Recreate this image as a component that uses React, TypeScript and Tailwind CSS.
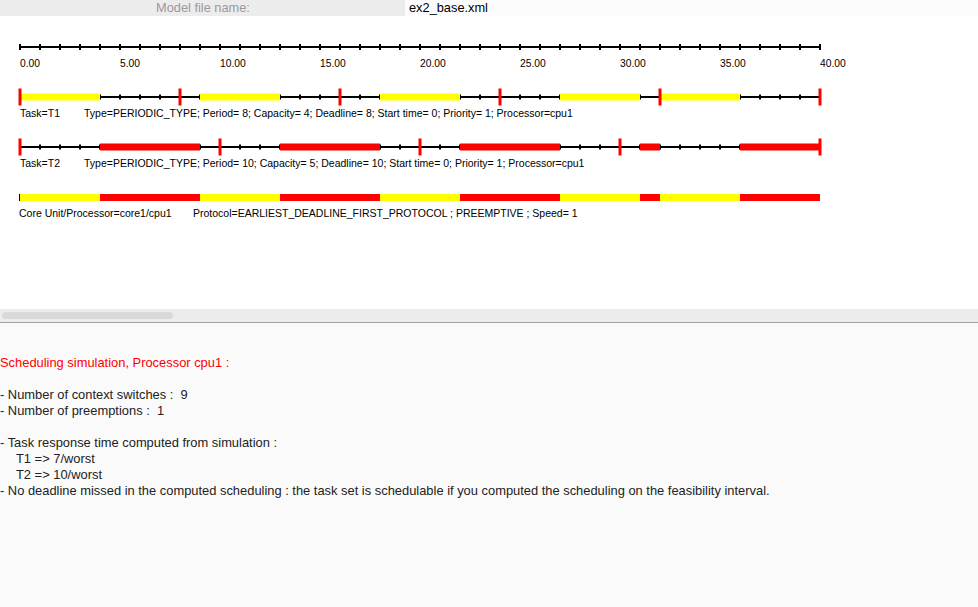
import React from 'react';

const X0 = 20;
const UNIT = 20;
const xAt = (t: number) => X0 + t * UNIT;

// [start, end] intervals on the 0..40 time scale
const t1Runs: [number, number][] = [[0, 4], [9, 13], [18, 22], [27, 31], [32, 36]];
const t2Runs: [number, number][] = [[4, 9], [13, 18], [22, 27], [31, 32], [36, 40]];
const t1Releases = [0, 8, 16, 24, 32, 40];
const t2Releases = [0, 10, 20, 30, 40];

const FONT = '"Liberation Sans", Arial, sans-serif';

function TaskRow({ y, runs, releases, color }: { y: number; runs: [number, number][]; releases: number[]; color: string }) {
  const ticks = Array.from({ length: 41 }, (_, i) => i);
  return (
    <g>
      <rect x={xAt(0)} y={y - 1} width={800} height={2} fill="#000" />
      {ticks.map((i) => (
        <rect key={i} x={xAt(i) - 1} y={y - 2.5} width={2} height={5} fill="#000" />
      ))}
      {runs.map(([a, b]) => (
        <rect key={a} x={xAt(a)} y={y - 3.5} width={(b - a) * UNIT} height={7} fill={color} />
      ))}
      {releases.map((r) => (
        <rect key={r} x={xAt(r) - 1.5} y={y - 8.5} width={3} height={17} fill="#ff0000" />
      ))}
    </g>
  );
}

function Chart() {
  const axisTicks = Array.from({ length: 41 }, (_, i) => i);
  const labels = Array.from({ length: 9 }, (_, i) => i * 5);
  return (
    <svg width={978} height={293} viewBox="0 16 978 293" style={{ fontFamily: FONT }}>
      {/* time axis */}
      <rect x={19} y={46} width={801} height={2} fill="#000" />
      {axisTicks.map((i) => (
        <rect key={i} x={xAt(i) - 1} y={44} width={2} height={6} fill="#000" />
      ))}
      {labels.map((t) => (
        <text key={t} x={xAt(t)} y={67} fontSize={10.3} fill="#000">
          {t.toFixed(2)}
        </text>
      ))}

      {/* T1 */}
      <TaskRow y={97} runs={t1Runs} releases={t1Releases} color="#ffff00" />
      <text x={20} y={117} fontSize={10.5} fill="#000">Task=T1</text>
      <text x={84} y={117} fontSize={10.5} fill="#000">
        Type=PERIODIC_TYPE; Period= 8; Capacity= 4; Deadline= 8; Start time= 0; Priority= 1; Processor=cpu1
      </text>

      {/* T2 */}
      <TaskRow y={147} runs={t2Runs} releases={t2Releases} color="#ff0000" />
      <text x={20} y={167} fontSize={10.5} fill="#000">Task=T2</text>
      <text x={84} y={167} fontSize={10.5} fill="#000">
        Type=PERIODIC_TYPE; Period= 10; Capacity= 5; Deadline= 10; Start time= 0; Priority= 1; Processor=cpu1
      </text>

      {/* core unit */}
      <rect x={19} y={194} width={1} height={7} fill="#000" />
      {t1Runs.map(([a, b]) => (
        <rect key={'y' + a} x={xAt(a)} y={194} width={(b - a) * UNIT} height={7} fill="#ffff00" />
      ))}
      {t2Runs.map(([a, b]) => (
        <rect key={'r' + a} x={xAt(a)} y={194} width={(b - a) * UNIT} height={7} fill="#ff0000" />
      ))}
      <text x={19} y={217} fontSize={10.5} fill="#000">Core Unit/Processor=core1/cpu1</text>
      <text x={193} y={217} fontSize={10.5} fill="#000">
        Protocol=EARLIEST_DEADLINE_FIRST_PROTOCOL ; PREEMPTIVE ; Speed= 1
      </text>
    </svg>
  );
}

export default function App() {
  return (
    <div className="w-[978px] h-[607px] flex flex-col bg-white overflow-hidden" style={{ fontFamily: FONT }}>
      {/* file name bar */}
      <div className="flex h-[16px] text-[12.8px] leading-[16px]">
        <div className="w-[405px] bg-[#ececec] text-[#9a9a9a] pl-[156px]">Model file name:</div>
        <div className="flex-1 bg-[#fcfcfc] text-black pl-[4px]">ex2_base.xml</div>
      </div>

      {/* chart */}
      <div className="h-[293px] bg-white">
        <Chart />
      </div>

      {/* horizontal scrollbar */}
      <div className="h-[13px] bg-[#ececec] flex items-center px-[2px]">
        <div className="w-[171px] h-[7px] rounded-full bg-[#d8dad8]" />
      </div>
      <div className="h-px bg-[#a0a0a0]" />

      {/* simulation output */}
      <div className="flex-1 bg-[#fafafa] pt-[32px] text-[12.9px] leading-[16px] text-[#222]">
        <div className="text-[#ff0000]">Scheduling simulation, Processor cpu1 :</div>
        <div className="h-[16px]" />
        <div className="whitespace-pre">- Number of context switches :  9</div>
        <div className="whitespace-pre">- Number of preemptions :  1</div>
        <div className="h-[16px]" />
        <div>- Task response time computed from simulation :</div>
        <div className="pl-[16px]">T1 =&gt; 7/worst</div>
        <div className="pl-[16px]">T2 =&gt; 10/worst</div>
        <div>
          - No deadline missed in the computed scheduling : the task set is schedulable if you computed the scheduling on the feasibility interval.
        </div>
      </div>
    </div>
  );
}
